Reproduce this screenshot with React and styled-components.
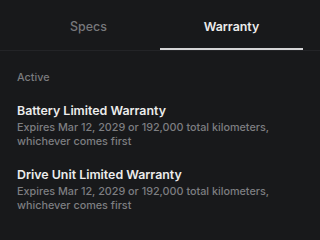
import React from "react";
import styled, { createGlobalStyle } from "styled-components";

const Global = createGlobalStyle`
  html, body { margin: 0; padding: 0; background: #18191b; }
  body { font-family: Inter, "Noto Sans", sans-serif; -webkit-font-smoothing: antialiased; }
`;

const Page = styled.div`
  width: 320px;
  height: 240px;
  background: #18191b;
  overflow: hidden;
`;

const TabBar = styled.div`
  display: grid;
  grid-template-columns: 1fr 1fr;
  padding: 0 17px;
  border-bottom: 1px solid #232427;
`;

const Tab = styled.div`
  height: 50px;
  display: flex;
  align-items: center;
  justify-content: center;
  font-size: 12.4px;
  font-weight: ${(p) => (p.$active ? 600 : 500)};
  color: ${(p) => (p.$active ? "#ececec" : "#77787b")};
  box-shadow: ${(p) => (p.$active ? "inset 0 -2px 0 #d4d4d6" : "none")};
  padding-top: 2px;
  box-sizing: border-box;
`;

const Body = styled.div`
  padding: 20px 17px 0;
  display: flex;
  flex-direction: column;
`;

const SectionLabel = styled.div`
  font-size: 10.8px;
  line-height: 14px;
  color: #7a7b7e;
  font-weight: 500;
  margin-bottom: 17px;
`;

const Item = styled.div`
  display: flex;
  flex-direction: column;
  margin-bottom: 17px;
`;

const Title = styled.div`
  font-size: 12.4px;
  font-weight: 600;
  color: #ececec;
  line-height: 18px;
  margin-bottom: 1px;
`;

const Sub = styled.div`
  font-size: 10.8px;
  color: #7d7e81;
  line-height: 14px;
  font-weight: 500;
`;

const items = [
  "Battery Limited Warranty",
  "Drive Unit Limited Warranty",
];

export default function App() {
  return (
    <Page>
      <Global />
      <TabBar>
        <Tab>Specs</Tab>
        <Tab $active>Warranty</Tab>
      </TabBar>
      <Body>
        <SectionLabel>Active</SectionLabel>
        {items.map((t) => (
          <Item key={t}>
            <Title>{t}</Title>
            <Sub>
              Expires Mar 12, 2029 or 192,000 total kilometers,
              <br />
              whichever comes first
            </Sub>
          </Item>
        ))}
      </Body>
    </Page>
  );
}
